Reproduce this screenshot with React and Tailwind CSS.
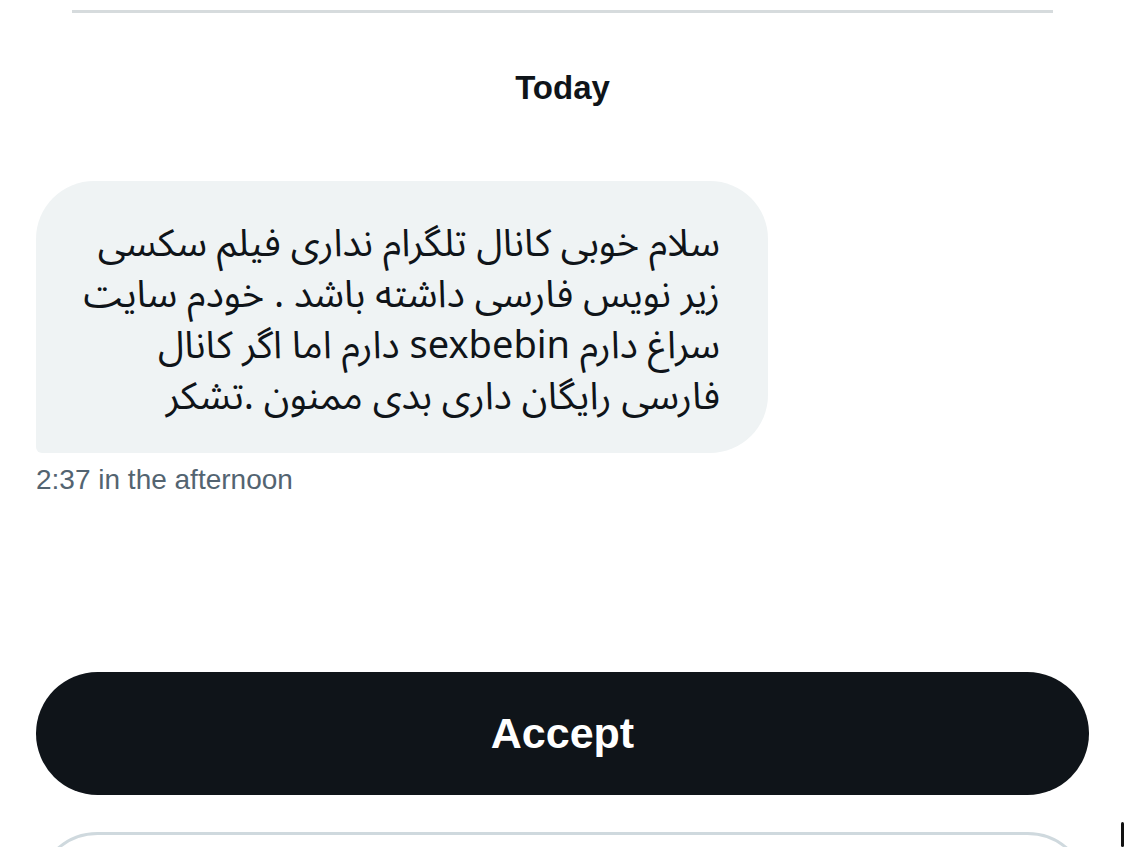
export default function App() {
  const lines = [
    'سلام خوبی کانال تلگرام نداری فیلم سکسی',
    'زیر نویس فارسی داشته باشد . خودم سایت',
    'سراغ دارم sexbebin دارم اما اگر کانال',
    'فارسی رایگان داری بدی ممنون .تشکر',
  ]

  return (
    <div className="relative h-[847px] overflow-hidden bg-white font-['Liberation_Sans',sans-serif] text-[#0f1419]">
      {/* header divider */}
      <div className="mx-[72px] mt-[10px] h-[3px] bg-[#d6dbdd]" />

      <div className="mt-[55px] text-center text-[33px] font-bold leading-[40px]">Today</div>

      {/* message */}
      <div className="mt-[73px] px-[36px]">
        <div
          dir="rtl"
          className="w-[732px] rounded-[58px] rounded-bl-[6px] bg-[#eff3f4] pt-[38px] pb-[30px] pr-[48px] pl-[40px] font-['Noto_Sans_Arabic','DejaVu_Sans',sans-serif] text-[38px] leading-[51px] text-[#0f1419]"
        >
          {lines.map((l) => (
            <div key={l} className="whitespace-nowrap">
              {l}
            </div>
          ))}
        </div>
        <div className="mt-[12px] text-[28px] leading-[30px] text-[#536471]">2:37 in the afternoon</div>
      </div>

      {/* actions */}
      <div className="mt-[177px] px-[36px]">
        <button className="flex h-[123px] w-full items-center justify-center rounded-full bg-[#0f1419] text-[43px] font-bold text-white">
          Accept
        </button>
        <div className="mt-[37px] h-[123px] w-full rounded-full border-[3px] border-[#cfd9de] bg-white" />
      </div>

      <div className="absolute right-[1px] top-[822px] h-[25px] w-[3px] rounded-full bg-[#111]" />
    </div>
  )
}
